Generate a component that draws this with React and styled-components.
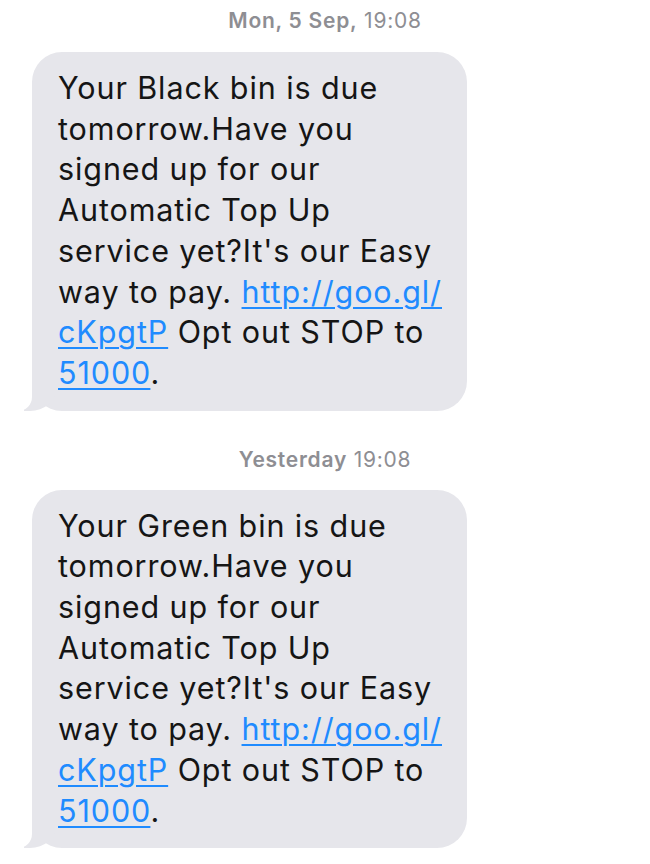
import React from 'react';
import styled, { createGlobalStyle } from 'styled-components';

const GlobalStyle = createGlobalStyle`
  html, body {
    margin: 0;
    padding: 0;
    background: #ffffff;
  }
  body {
    font-family: Inter, "Liberation Sans", Arial, sans-serif;
    -webkit-font-smoothing: antialiased;
  }
`;

const Thread = styled.div`
  width: 650px;
  display: flex;
  flex-direction: column;
  padding: 8px 0 0 32px;
  box-sizing: border-box;
`;

const Stamp = styled.div`
  align-self: center;
  margin-left: -32px;
  font-size: 21px;
  line-height: 26px;
  letter-spacing: 0.75px;
  color: #8e8e93;
  margin-bottom: ${({ $gap }) => $gap}px;
  margin-top: ${({ $top }) => $top || 0}px;

  b {
    font-weight: 600;
  }
`;

const Bubble = styled.div`
  position: relative;
  width: 435px;
  box-sizing: border-box;
  padding: 16px 6px 17px 26px;
  background: #e6e6eb;
  border-radius: 30px;
  color: #151515;
  font-size: 30.5px;
  line-height: 40.7px;
  letter-spacing: 0.9px;

  &::before {
    content: '';
    position: absolute;
    bottom: 0;
    left: -8px;
    width: 32px;
    height: 30px;
    background: #e6e6eb;
    border-bottom-right-radius: 26px 22px;
  }

  &::after {
    content: '';
    position: absolute;
    bottom: 0;
    left: -22px;
    width: 22px;
    height: 32px;
    background: #ffffff;
    border-bottom-right-radius: 14px;
  }
`;

const Text = styled.p`
  position: relative;
  z-index: 1;
  margin: 0;
  white-space: nowrap;
`;

const Link = styled.a`
  color: #1f8bff;
  text-decoration: underline;
  text-decoration-thickness: 2px;
  text-underline-offset: 4px;
`;

const messages = [
  { stamp: 'Mon, 5 Sep,', time: '19:08', colour: 'Black', top: 0, after: 18 },
  { stamp: 'Yesterday', time: '19:08', colour: 'Green', top: 36, after: 17 },
];

const App = () => (
  <>
    <GlobalStyle />
    <Thread>
      {messages.map((m) => (
        <React.Fragment key={m.colour}>
          <Stamp $top={m.top} $gap={m.after}>
            <b>{m.stamp}</b> {m.time}
          </Stamp>
          <Bubble>
            <Text>
              Your {m.colour} bin is due
              <br />
              tomorrow.Have you
              <br />
              signed up for our
              <br />
              Automatic Top Up
              <br />
              service yet?It's our Easy
              <br />
              way to pay. <Link href="#">http://goo.gl/<br />cKpgtP</Link> Opt out STOP to
              <br />
              <Link href="#">51000</Link>.
            </Text>
          </Bubble>
        </React.Fragment>
      ))}
    </Thread>
  </>
);

export default App;
